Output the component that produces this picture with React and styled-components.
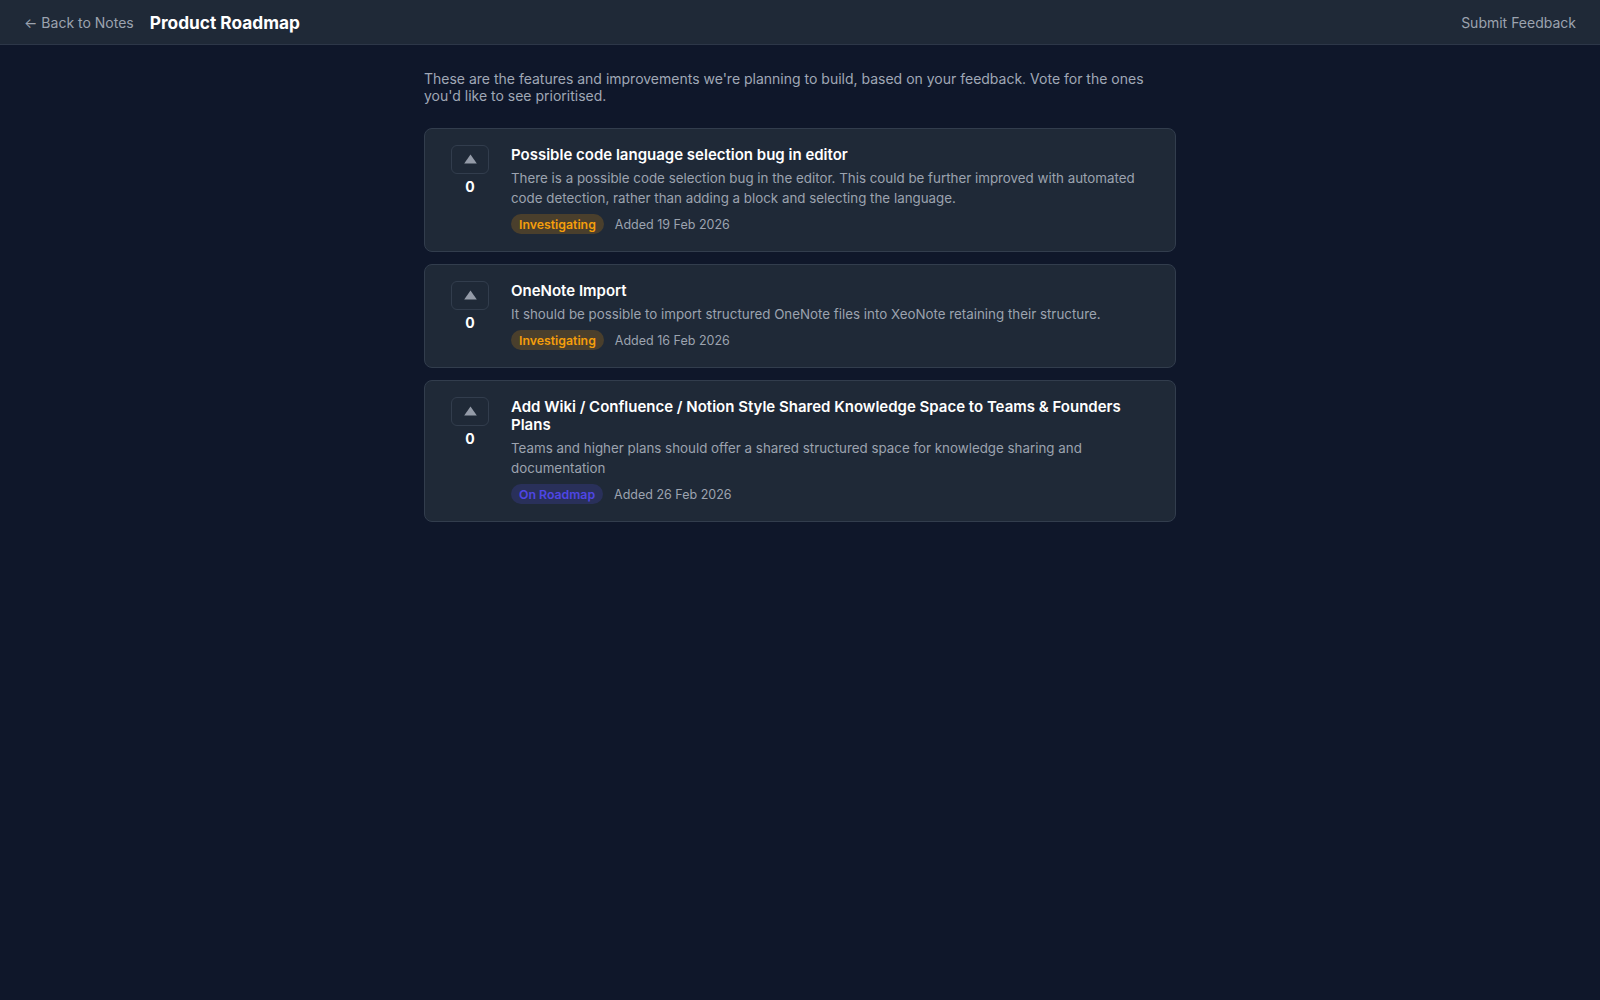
import React from "react";
import styled, { createGlobalStyle } from "styled-components";

const Global = createGlobalStyle`
  html, body { margin: 0; padding: 0; background: #0f172a; }
  body { font-family: Inter, "Noto Sans", "Liberation Sans", sans-serif; -webkit-font-smoothing: antialiased; }
  #root { min-height: 100vh; background: #0f172a; }
  * { box-sizing: border-box; }
`;

const Header = styled.header`
  display: flex;
  align-items: center;
  justify-content: space-between;
  height: 45px;
  padding: 0 24px;
  background: #1f2937;
  border-bottom: 1px solid #2d3748;
`;

const HeaderLeft = styled.div`
  display: flex;
  align-items: center;
  gap: 16px;
`;

const BackLink = styled.a`
  display: flex;
  align-items: center;
  gap: 4px;
  color: #9ca3af;
  font-size: 14px;
  text-decoration: none;
  cursor: pointer;
`;

const PageTitle = styled.h1`
  margin: 0;
  font-size: 17.3px;
  font-weight: 700;
  color: #ffffff;
`;

const HeaderLink = styled.a`
  color: #9ca3af;
  font-size: 14px;
  text-decoration: none;
  cursor: pointer;
`;

const Main = styled.main`
  max-width: 800px;
  margin: 0 auto;
  padding: 25px 24px;
`;

const Intro = styled.p`
  margin: 0 0 24px;
  font-size: 14px;
  line-height: 17px;
  color: #a0a8b6;
`;

const List = styled.div`
  display: flex;
  flex-direction: column;
  gap: 12px;
`;

const Card = styled.div`
  display: flex;
  gap: 16px;
  padding: 16px 20px 17px;
  background: #1f2937;
  border: 1px solid #323d4d;
  border-radius: 8px;
`;

const VoteColumn = styled.div`
  display: flex;
  flex-direction: column;
  align-items: center;
  width: 50px;
  flex-shrink: 0;
  gap: 3px;
`;

const VoteButton = styled.button`
  display: flex;
  align-items: center;
  justify-content: center;
  width: 38px;
  height: 29px;
  padding: 0 0 1px;
  background: transparent;
  border: 1px solid #323d4d;
  border-radius: 6px;
  color: #949ba8;
  cursor: pointer;
`;

const VoteCount = styled.span`
  font-size: 14px;
  font-weight: 700;
  color: #ffffff;
  line-height: 20px;
`;

const Body = styled.div`
  display: flex;
  flex-direction: column;
  min-width: 0;
  flex: 1;
  padding-top: 1px;
`;

const ItemTitle = styled.h3`
  margin: 0;
  font-size: 15px;
  font-weight: 600;
  line-height: 18px;
  color: #ffffff;
`;

const Description = styled.p`
  margin: 4px 0 0;
  font-size: 13.35px;
  line-height: 20px;
  color: #9ca3af;
`;

const Meta = styled.div`
  display: flex;
  align-items: center;
  gap: 11px;
  margin-top: 6px;
`;

const Badge = styled.span`
  display: inline-flex;
  align-items: center;
  height: 20px;
  padding: 0 8px;
  border-radius: 9999px;
  font-size: 12.3px;
  font-weight: 600;
  color: ${(p) => (p.$tone === "roadmap" ? "#4f46e5" : "#f59e0b")};
  background: ${(p) => (p.$tone === "roadmap" ? "#29305a" : "#4a3f2c")};
`;

const DateText = styled.span`
  font-size: 12.5px;
  color: #9ca3af;
`;

const UpIcon = () => (
  <svg width="13" height="10" viewBox="0 0 13 10" aria-hidden="true">
    <polygon points="6.5,0.5 12.8,9.5 0.2,9.5" fill="currentColor" />
  </svg>
);

const items = [
  {
    title: "Possible code language selection bug in editor",
    desc: "There is a possible code selection bug in the editor. This could be further improved with automated code detection, rather than adding a block and selecting the language.",
    status: "Investigating",
    tone: "investigating",
    date: "Added 19 Feb 2026",
  },
  {
    title: "OneNote Import",
    desc: "It should be possible to import structured OneNote files into XeoNote retaining their structure.",
    status: "Investigating",
    tone: "investigating",
    date: "Added 16 Feb 2026",
  },
  {
    title: "Add Wiki / Confluence / Notion Style Shared Knowledge Space to Teams & Founders Plans",
    desc: "Teams and higher plans should offer a shared structured space for knowledge sharing and documentation",
    status: "On Roadmap",
    tone: "roadmap",
    date: "Added 26 Feb 2026",
  },
];

export default function App() {
  return (
    <>
      <Global />
      <Header>
        <HeaderLeft>
          <BackLink>
            <span>←</span>
            <span>Back to Notes</span>
          </BackLink>
          <PageTitle>Product Roadmap</PageTitle>
        </HeaderLeft>
        <HeaderLink>Submit Feedback</HeaderLink>
      </Header>
      <Main>
        <Intro>
          These are the features and improvements we're planning to build, based on your feedback. Vote for the ones you'd like to see prioritised.
        </Intro>
        <List>
          {items.map((it) => (
            <Card key={it.title}>
              <VoteColumn>
                <VoteButton aria-label="Upvote">
                  <UpIcon />
                </VoteButton>
                <VoteCount>0</VoteCount>
              </VoteColumn>
              <Body>
                <ItemTitle>{it.title}</ItemTitle>
                <Description>{it.desc}</Description>
                <Meta>
                  <Badge $tone={it.tone}>{it.status}</Badge>
                  <DateText>{it.date}</DateText>
                </Meta>
              </Body>
            </Card>
          ))}
        </List>
      </Main>
    </>
  );
}
